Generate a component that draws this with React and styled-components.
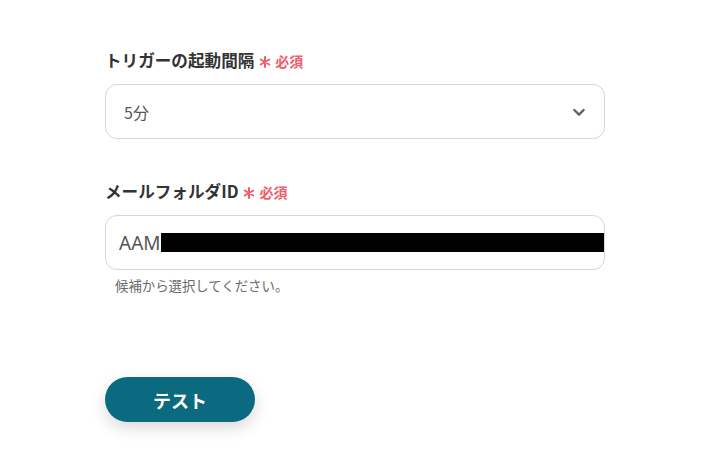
import React from "react";
import styled, { createGlobalStyle } from "styled-components";

const Global = createGlobalStyle`
  html, body { margin: 0; padding: 0; background: #fff; }
  body { font-family: "Noto Sans CJK JP", "Noto Sans", sans-serif; }
`;

const Page = styled.div`
  width: 715px;
  height: 472px;
  padding: 46px 0 0 105px;
  box-sizing: border-box;
  display: flex;
  flex-direction: column;
`;

const Field = styled.div`
  display: flex;
  flex-direction: column;
  width: 500px;
  margin-bottom: ${(p) => p.$mb || 0}px;
`;

const Label = styled.div`
  display: flex;
  align-items: center;
  height: 28px;
  font-size: 16.6px;
  font-weight: 700;
  color: #333;
  margin-bottom: 10px;
`;

const StarWrap = styled.span`
  display: inline-flex;
  margin: 3px 4px 0 5px;
`;

const Required = styled.span`
  color: #f25c6a;
  font-size: 14px;
  font-weight: 700;
  margin-top: 2px;
`;

const Box = styled.div`
  height: 55px;
  box-sizing: border-box;
  border: 1px solid #d4d6dc;
  border-radius: 12px;
  display: flex;
  align-items: center;
  justify-content: space-between;
  padding: 0 17px 0 ${(p) => p.$pl || 18}px;
  font-size: 16px;
  color: #4a4a4a;
  overflow: hidden;
`;

const Value = styled.span`
  display: flex;
  align-items: center;
  font-family: ${(p) => (p.$latin ? '"Noto Sans", "Noto Sans CJK JP", sans-serif' : 'inherit')};
  font-size: ${(p) => (p.$latin ? 19 : 16)}px;
  color: #555;
`;

const Redact = styled.span`
  display: inline-block;
  width: 443px;
  height: 19px;
  background: #000;
`;

const Help = styled.div`
  font-size: 13.4px;
  color: #6b6b6b;
  margin: 5px 0 0 10px;
`;

const Button = styled.button`
  width: 150px;
  height: 45px;
  border: none;
  border-radius: 23px;
  background: #0b6980;
  color: #fff;
  font-family: inherit;
  font-size: 18px;
  font-weight: 700;
  box-shadow: 0 6px 16px rgba(0, 0, 0, 0.15);
  padding: 0;
  cursor: pointer;
`;

const Star = () => (
  <StarWrap>
    <svg width="12" height="12" viewBox="0 0 12 12" stroke="#f25c6a" strokeWidth="2" strokeLinecap="round">
      <path d="M6 1v10M1.7 3.5l8.6 5M1.7 8.5l8.6-5" />
    </svg>
  </StarWrap>
);

const Chevron = () => (
  <svg width="16" height="16" viewBox="0 0 24 24" fill="none" stroke="#606060" strokeWidth="3.5" strokeLinecap="round" strokeLinejoin="round">
    <path d="M5 9l7 7 7-7" />
  </svg>
);

export default function App() {
  return (
    <>
      <Global />
      <Page>
        <Field $mb={38}>
          <Label>
            トリガーの起動間隔<Star /><Required>必須</Required>
          </Label>
          <Box>
            <Value>5分</Value>
            <Chevron />
          </Box>
        </Field>
        <Field $mb={82}>
          <Label>
            メールフォルダID<Star /><Required>必須</Required>
          </Label>
          <Box $pl={13}>
            <Value $latin>
              AAM<Redact />
            </Value>
          </Box>
          <Help>候補から選択してください。</Help>
        </Field>
        <Button>テスト</Button>
      </Page>
    </>
  );
}
